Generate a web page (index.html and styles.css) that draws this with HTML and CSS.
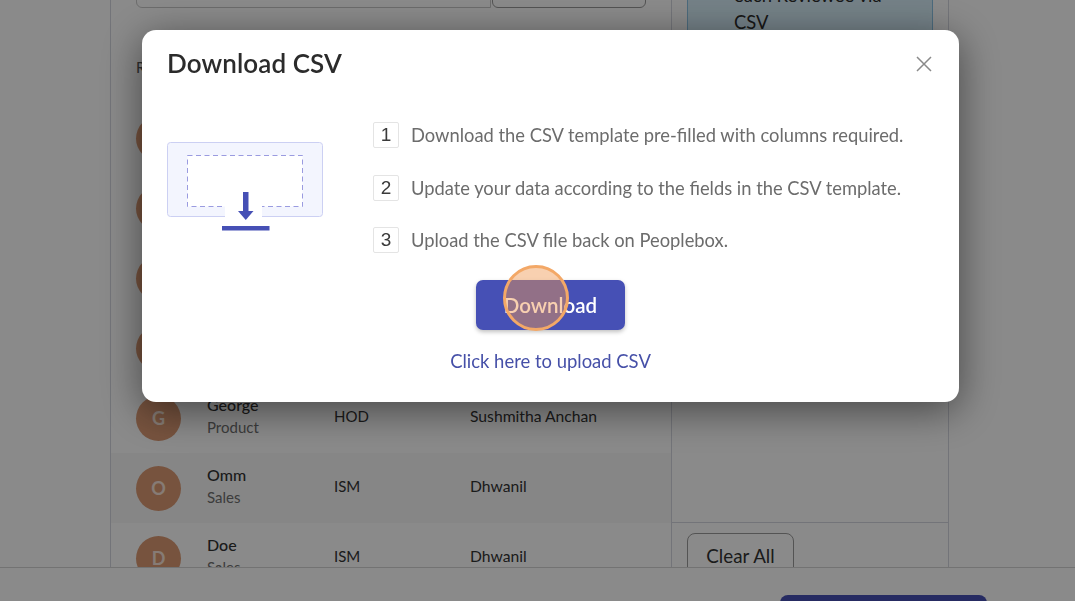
FILE: index.html
```html
<!DOCTYPE html>
<html lang="en">
<head>
<meta charset="utf-8">
<title>Download CSV</title>
<link rel="stylesheet" href="styles.css">
</head>
<body>
<div class="page">
  <div class="card">
    <div class="main">
      <div class="toolbar"><div class="search"></div><div class="tool-btn"></div></div>
      <div class="thead">Reviewee</div>
      <div class="row"><div class="avatar">A</div><div class="who"><b>Alex</b><span>Sales</span></div><div class="role">ISM</div><div class="mgr">Dhwanil</div></div>
      <div class="row"><div class="avatar">B</div><div class="who"><b>Ben</b><span>Sales</span></div><div class="role">ISM</div><div class="mgr">Dhwanil</div></div>
      <div class="row"><div class="avatar">C</div><div class="who"><b>Carl</b><span>Sales</span></div><div class="role">ISM</div><div class="mgr">Dhwanil</div></div>
      <div class="row"><div class="avatar">E</div><div class="who"><b>Emma</b><span>Sales</span></div><div class="role">ISM</div><div class="mgr">Dhwanil</div></div>
      <div class="row"><div class="avatar">G</div><div class="who"><b>George</b><span>Product</span></div><div class="role">HOD</div><div class="mgr">Sushmitha Anchan</div></div>
      <div class="row alt"><div class="avatar">O</div><div class="who"><b>Omm</b><span>Sales</span></div><div class="role">ISM</div><div class="mgr">Dhwanil</div></div>
      <div class="row"><div class="avatar">D</div><div class="who"><b>Doe</b><span>Sales</span></div><div class="role">ISM</div><div class="mgr">Dhwanil</div></div>
    </div>
    <div class="side">
      <div class="side-top"><div class="note"><p>each Reviewee via CSV</p></div></div>
      <div class="side-foot"><div class="clear">Clear All</div></div>
    </div>
  </div>
  <div class="footer"><div class="save"></div></div>
</div>
<div class="overlay"></div>
<div class="modal">
  <div class="modal-head">
    <h2>Download CSV</h2>
    <svg class="close" width="16" height="16" viewBox="0 0 16 16"><path d="M1 1l14 14M15 1L1 15" stroke="#8a8a8a" stroke-width="1.5" fill="none"/></svg>
  </div>
  <div class="modal-body">
    <div class="illus">
      <svg width="156" height="92" viewBox="0 0 156 92">
        <rect x=".5" y=".5" width="155" height="74" rx="3" fill="#f3f5fe" stroke="#ccd0f3"/>
        <rect x="20.5" y="13.5" width="115" height="51" fill="#fff" stroke="#9a9be0" stroke-dasharray="5 3.5"/>
        <rect x="58" y="56" width="37" height="24" fill="#fff"/>
        <path d="M76 50h5.500v20H76z" fill="#4650b5"/>
        <path d="M71 69h15.500l-7.750 9z" fill="#4650b5"/>
        <rect x="55" y="84" width="47.500" height="4.500" fill="#4650b5"/>
      </svg>
    </div>
    <ol class="steps">
      <li class="step"><span class="num">1</span><span>Download the CSV template pre-filled with columns required.</span></li>
      <li class="step"><span class="num">2</span><span>Update your data according to the fields in the CSV template.</span></li>
      <li class="step"><span class="num">3</span><span>Upload the CSV file back on Peoplebox.</span></li>
    </ol>
  </div>
  <div class="actions">
    <div class="download">Download<span class="pulse"></span></div>
    <a class="upload" href="#">Click here to upload CSV</a>
  </div>
</div>
</body>
</html>
```
FILE: styles.css
```css
* { box-sizing: border-box; }
html, body { margin: 0; height: 100%; overflow: hidden; }
body { font-family: Lato, "Open Sans", sans-serif; color: #2b2b2b; background: #fff; }
.page { height: 601px; padding-left: 110px; overflow: hidden; position: relative; }
.card { width: 839px; height: 601px; display: flex; border-left: 1px solid #d5d7e0; border-right: 1px solid #d5d7e0; }
.main { width: 561px; flex: none; border-right: 1px solid #d5d7e0; }
.toolbar { height: 8px; padding-left: 25px; display: flex; align-items: flex-end; gap: 1px; overflow: hidden; }
.search { width: 355px; height: 30px; flex: none; border: 1px solid #c9c9c9; border-radius: 0 0 0 6px; }
.tool-btn { width: 154px; height: 30px; flex: none; border: 1px solid #9a9a9a; border-radius: 0 0 6px 6px; }
.thead { height: 95px; padding: 50px 0 0 25px; font-size: 15px; color: #555; }
.row { height: 70px; display: flex; align-items: center; padding-left: 25px; font-size: 15px; }
.row.alt { background: #f8f8f8; }
.avatar { width: 45px; height: 45px; flex: none; border-radius: 50%; background: #dc9a74; color: #f7e4d8; font-weight: 700; font-size: 18px; display: flex; align-items: center; justify-content: center; }
.who { width: 127px; margin-left: 26px; padding-bottom: 4px; flex: none; display: flex; flex-direction: column; gap: 4px; }
.who b { font-weight: 500; font-size: 16px; line-height: 19px; color: #333; }
.who span { color: #6f6f6f; line-height: 19px; }
.role { width: 136px; flex: none; color: #333; padding-bottom: 4px; }
.mgr { color: #333; padding-bottom: 4px; font-size: 15.700px; }
.side { flex: 1; display: flex; flex-direction: column; }
.side-top { height: 522px; padding: 0 15px; flex: none; }
.note { height: 80px; margin-top: -18px; padding: 0 0 0 46px; background: #d7effa; border: 1px solid #8cc4e6; border-top: 0; font-size: 18.400px; line-height: 27px; }
.note p { margin: 0; width: 150px; }
.side-foot { border-top: 1px solid #d5d7e0; padding: 10px 15px 0; }
.clear { width: 107px; height: 48px; border: 1px solid #9c9c9c; border-radius: 8px; font-size: 18.800px; text-align: center; line-height: 44px; color: #333; }
.footer { position: absolute; left: 0; right: 0; bottom: 0; height: 34px; background: #fff; border-top: 1px solid #d5d5d5; }
.save { position: absolute; left: 780px; top: 27px; width: 207px; height: 40px; border-radius: 8px; background: #4650b5; }
.overlay { position: fixed; inset: 0; background: rgba(0, 0, 0, .46); }
.modal { position: fixed; left: 142px; top: 30px; width: 817px; height: 372px; background: #fff; border-radius: 14px; box-shadow: 0 8px 40px rgba(0, 0, 0, .5); padding: 0 25px; }
.modal-head { height: 67px; display: flex; align-items: center; justify-content: space-between; padding-right: 2px; }
.modal-head h2 { margin: 0 0 2px; font-size: 26px; font-weight: 600; letter-spacing: .1px; color: #2b2b2b; }
.modal-head .close { margin-top: 1px; }
.modal-body { display: flex; align-items: flex-start; padding-top: 25px; }
.illus { width: 206px; flex: none; padding-top: 20px; line-height: 0; }
.steps { list-style: none; margin: 0; padding: 0; display: flex; flex-direction: column; gap: 26.500px; }
.step { display: flex; align-items: center; gap: 12px; font-size: 18.340px; color: #6c6c6c; height: 26px; white-space: nowrap; }
.num { width: 26px; height: 26px; flex: none; border: 1px solid #e4e4e4; border-radius: 2px; display: flex; align-items: center; justify-content: center; font-family: "Liberation Sans", sans-serif; font-size: 19px; color: #3a3a3a; }
.actions { display: flex; flex-direction: column; align-items: center; margin-top: 27px; }
.download { position: relative; width: 149px; height: 50px; background: #4650b5; border-radius: 7px; color: #fff; font-size: 20.500px; font-weight: 600; text-align: center; line-height: 50px; box-shadow: 0 2px 4px rgba(0, 0, 0, .25); }
.pulse { position: absolute; left: 27px; top: -15px; width: 66px; height: 66px; border-radius: 50%; background: rgba(240, 150, 80, .45); border: 3px solid #f3a867; }
.upload { margin-top: 20px; font-size: 18.450px; color: #4650a8; text-decoration: none; }
```
